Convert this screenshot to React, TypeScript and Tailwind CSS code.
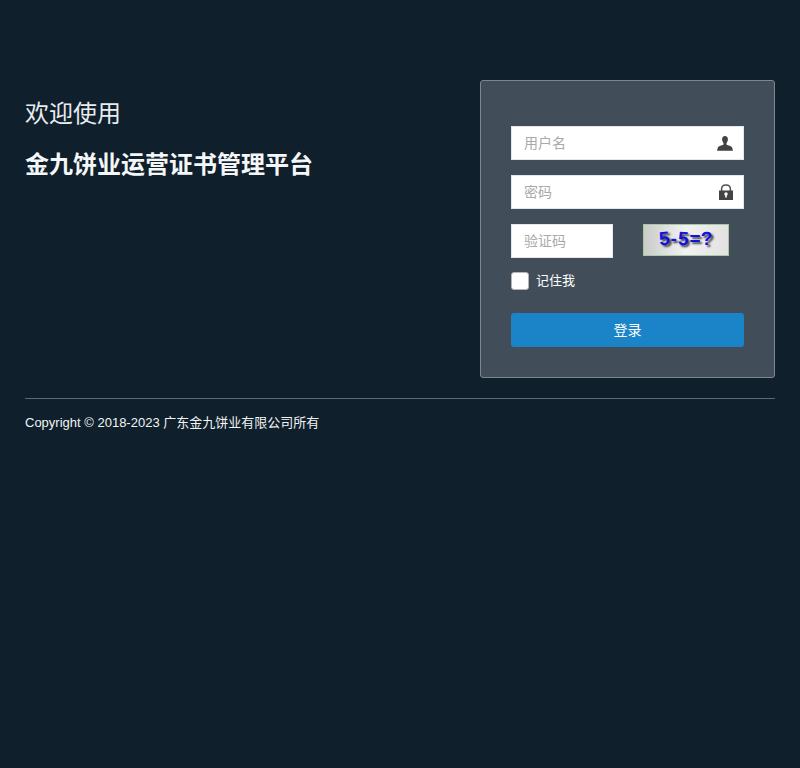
import { useState } from 'react';

const font = 'font-["Liberation_Sans","Noto_Sans_CJK_SC",sans-serif]';

const UserIcon = () => (
  <svg width="16" height="15" viewBox="0 0 16 15" fill="#434343">
    <path d="M8 0C6.100 0 5.100 1.400 5.100 3.300c0 1.500.5 2.900 1.400 3.700v1.600C4.800 9.700 1.500 9.900.8 11.800L0 14.800h16l-.8-3C14.500 9.900 11.200 9.700 9.500 8.600V7c.9-.8 1.400-2.200 1.400-3.700C10.900 1.400 9.900 0 8 0z" />
  </svg>
);

const LockIcon = () => (
  <svg width="14" height="16" viewBox="0 0 14 16">
    <path d="M2.600 7V5C2.600 2.400 4.600 1 7 1s4.400 1.400 4.400 4v2" fill="none" stroke="#505050" strokeWidth="1.500" />
    <rect x="0" y="6.500" width="14" height="9.500" fill="#434343" />
    <circle cx="7" cy="10" r="1.700" fill="#fff" />
    <rect x="6.200" y="10" width="1.600" height="3.500" fill="#fff" />
  </svg>
);

const App = () => {
  const [remember, setRemember] = useState(false);

  return (
    <div className={`min-h-[768px] bg-[#0f1f2c] px-[25px] pt-20 text-white ${font}`}>
      <div className="flex justify-between">
        <div className="pt-[16px]">
          <h2 className="text-[24px] leading-[36px] text-[#e8ebed]">欢迎使用</h2>
          <h1 className="mt-[15px] text-[24px] font-bold leading-[36px] text-[#f4f6f7]">金九饼业运营证书管理平台</h1>
        </div>

        <form className="h-[298px] w-[295px] rounded-[3px] border border-[#7c8791] bg-[#414e59] px-[30px] pt-[45px]">
          <div className="flex h-[34px] items-center border border-[#e5e7ef] bg-white pl-[12px] pr-[10px]">
            <input placeholder="用户名" className="min-w-0 flex-1 bg-transparent text-[14px] text-[#333] outline-none placeholder:text-[#a9a9a9]" />
            <UserIcon />
          </div>

          <div className="mt-[15px] flex h-[34px] items-center border border-[#e5e7ef] bg-white pl-[12px] pr-[10px]">
            <input type="password" placeholder="密码" className="min-w-0 flex-1 bg-transparent text-[14px] text-[#333] outline-none placeholder:text-[#a9a9a9]" />
            <LockIcon />
          </div>

          <div className="mt-[15px] flex h-[34px] items-start justify-between pr-[15px]">
            <input placeholder="验证码" className="h-[34px] w-[102px] border border-[#e5e7ef] bg-white pl-[12px] text-[14px] text-[#333] outline-none placeholder:text-[#a9a9a9]" />
            <div className="flex h-[32px] w-[86px] items-center justify-center gap-[1px] border border-[#a9c9a4] bg-gradient-to-r from-[#c9ccc9] via-[#f2f2f2] to-[#e2e2e2] pb-[3px] text-[19px] font-bold leading-none text-[#1212e0] [text-shadow:2px_2px_2px_#444]">
              <span className="inline-block -rotate-6">5</span>
              <span className="inline-block">-</span>
              <span className="inline-block rotate-3">5</span>
              <span className="inline-block">=</span>
              <span className="inline-block -rotate-3">?</span>
            </div>
          </div>

          <label className="mt-[14px] flex h-[18px] items-center">
            <input type="checkbox" checked={remember} onChange={(e) => setRemember(e.target.checked)} className="h-[18px] w-[18px] appearance-none rounded-[3px] border border-[#b5b5b5] bg-white checked:bg-[#1b84c9]" />
            <span className="ml-[7px] text-[13px] text-white">记住我</span>
          </label>

          <button type="button" className="mt-[23px] h-[34px] w-full rounded-[3px] bg-[#1b84c9] text-[14px] text-white">登录</button>
        </form>
      </div>

      <div className="mt-5 border-t border-[#5c6872] pt-[15px] text-[13px] leading-[17px] text-[#f2f4f5]">
        Copyright © 2018-2023 广东金九饼业有限公司所有
      </div>
    </div>
  );
};

export default App;
